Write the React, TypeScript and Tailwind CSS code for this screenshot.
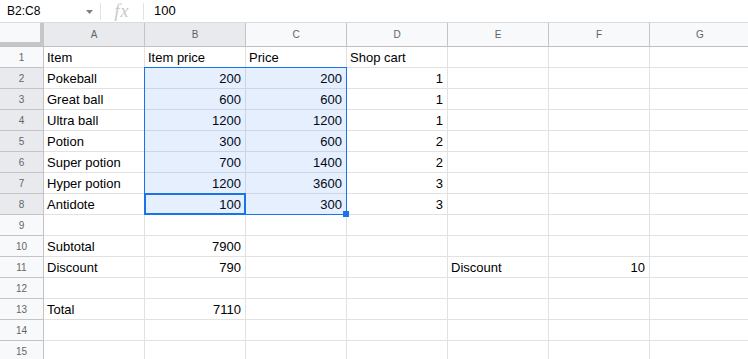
type Cell = string | number | null;

const COLS = ["A", "B", "C", "D", "E", "F", "G"];

const ROWS: Cell[][] = [
  ["Item", "Item price", "Price", "Shop cart"],
  ["Pokeball", 200, 200, 1],
  ["Great ball", 600, 600, 1],
  ["Ultra ball", 1200, 1200, 1],
  ["Potion", 300, 600, 2],
  ["Super potion", 700, 1400, 2],
  ["Hyper potion", 1200, 3600, 3],
  ["Antidote", 100, 300, 3],
  [],
  ["Subtotal", 7900],
  ["Discount", 790, null, null, "Discount", 10],
  [],
  ["Total", 7110],
  [],
  [],
];

// selected range B2:C8
const isSelCol = (c: number) => c === 1 || c === 2;
const isSelRow = (r: number) => r >= 2 && r <= 8;

const FormulaBar = () => (
  <div className="flex h-[23px] items-center border-b border-[#dadce0] bg-white">
    <div className="flex w-[100px] items-center justify-between pl-[7px] pr-[7px]">
      <span className="text-[12px] text-black">B2:C8</span>
      <svg width="7" height="4" viewBox="0 0 7 4" className="mt-[1px]">
        <polygon points="0,0 7,0 3.5,4" fill="#808080" />
      </svg>
    </div>
    <div className="h-[17px] w-px bg-[#e3e3e3]" />
    <div className="flex w-[42px] items-center justify-center">
      <span className="font-['Liberation_Serif',serif] text-[18px] italic leading-none tracking-[1px] text-[#c8c8c8]">
        fx
      </span>
    </div>
    <div className="h-[17px] w-px bg-[#e3e3e3]" />
    <span className="pl-[10px] text-[13px] text-black">100</span>
  </div>
);

const HeaderRow = () => (
  <div className="flex h-[24px] border-b border-[#c0c0c0]">
    <div className="h-full w-[44px] shrink-0 border-b-4 border-r-4 border-[#c4c7c5] bg-[#f8f9fa]" />
    {COLS.map((c, i) => (
      <div
        key={c}
        className={`flex h-full w-[101px] shrink-0 items-center justify-center border-r border-[#c4c4c4] text-[10px] text-[#5f6368] ${
          isSelCol(i + 1) ? "bg-[#e8eaed]" : "bg-[#f8f9fa]"
        }`}
      >
        {c}
      </div>
    ))}
  </div>
);

const Row = ({ n, cells }: { n: number; cells: Cell[] }) => (
  <div className="flex h-[21px]">
    <div
      className={`flex h-full w-[44px] shrink-0 items-center justify-center border-b border-r border-[#c4c4c4] text-[10px] text-[#666] ${
        isSelRow(n) ? "bg-[#e8eaed]" : "bg-[#f8f9fa]"
      }`}
    >
      {n}
    </div>
    {COLS.map((c, i) => {
      const v = cells[i];
      const num = typeof v === "number";
      return (
        <div
          key={c}
          className={`flex h-full w-[101px] shrink-0 items-center border-b border-r border-[#e2e2e2] px-[4px] pl-[3px] text-[13px] leading-[15px] text-black ${
            num ? "justify-end" : "justify-start"
          }`}
        >
          {v ?? ""}
        </div>
      );
    })}
  </div>
);

export default function App() {
  return (
    <div className="relative h-[359px] w-[748px] overflow-hidden bg-white font-['Liberation_Sans',Arial,sans-serif]">
      <FormulaBar />
      <HeaderRow />
      {ROWS.map((cells, i) => (
        <Row key={i} n={i + 1} cells={cells} />
      ))}

      {/* selection B2:C8 */}
      <div className="pointer-events-none absolute left-[144px] top-[67px] h-[148px] w-[203px] border border-[#1a73e8] bg-[rgba(14,101,235,0.1)]" />
      {/* active cell B8 */}
      <div className="pointer-events-none absolute left-[144px] top-[193px] h-[22px] w-[102px] border-2 border-[#1a73e8]" />
      {/* fill handle */}
      <div className="pointer-events-none absolute left-[343px] top-[211px] h-[6px] w-[6px] bg-[#1a73e8]" />
    </div>
  );
}
